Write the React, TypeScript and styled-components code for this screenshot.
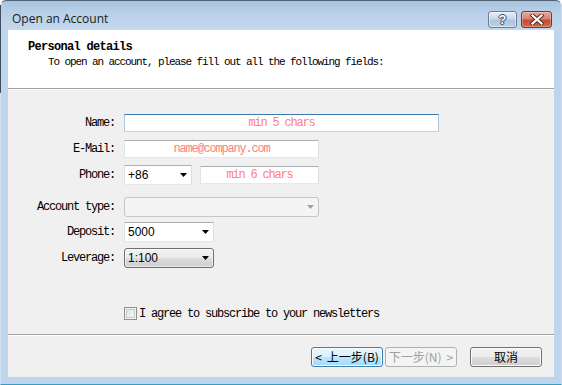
import React from "react";
import styled, { createGlobalStyle, css } from "styled-components";

const GlobalStyle = createGlobalStyle`
  html, body { margin: 0; padding: 0; background: #ffffff; }
  body { font-family: "Liberation Sans", Arial, sans-serif; }
  * { box-sizing: border-box; }
`;

const MONO = `"Liberation Mono", "Noto Sans CJK SC", monospace`;
const CJK = `"Noto Sans CJK SC", "Liberation Sans", sans-serif`;

const Window = styled.div`
  position: relative;
  width: 562px;
  height: 385px;
  display: flex;
  flex-direction: column;
  border: 1px solid #4f6274;
  border-left-color: #d3e2f2;
  border-right-color: #c9dcf0;
  border-bottom-color: #3b9cc0;
  border-radius: 6px 6px 0 0;
  background: linear-gradient(
    180deg,
    #a9c3df 0px,
    #b9d0e9 12px,
    #c3d8ee 29px,
    #bed5ed 30px,
    #bed5ed 100%
  );
  padding: 0 7px 7px 7px;
  &::before {
    content: "";
    position: absolute;
    left: -1px;
    top: 4px;
    width: 1px;
    height: 88px;
    background: #3e4f60;
  }
`;

const TitleBar = styled.div`
  height: 29px;
  display: flex;
  align-items: flex-start;
  padding-left: 4px;
`;

const Title = styled.div`
  margin-top: 10px;
  font-family: "Open Sans", "Noto Sans", sans-serif;
  font-size: 12px;
  line-height: 16px;
  color: #1a1a1a;
`;

const CaptionButtons = styled.div`
  margin-left: auto;
  margin-top: 10px;
  margin-right: 2px;
  display: flex;
  gap: 4px;
`;

const CaptionButton = styled.div<{ $variant: "help" | "close" }>`
  height: 17px;
  border-radius: 3px;
  display: flex;
  align-items: center;
  justify-content: center;
  ${(p) =>
    p.$variant === "help"
      ? css`
          width: 29px;
          border: 1px solid #6a7f96;
          background: linear-gradient(180deg, #e6eef7 0%, #c9d9ea 45%, #afc5de 55%, #bcd0e6 100%);
          box-shadow: inset 0 0 0 1px rgba(255, 255, 255, 0.45);
        `
      : css`
          width: 31px;
          border: 1px solid #6e3b33;
          background: linear-gradient(180deg, #eaa898 0%, #d9826f 45%, #c44a35 55%, #d06a4e 100%);
          box-shadow: inset 0 0 0 1px rgba(255, 220, 210, 0.35);
        `}
`;

const HelpGlyph = styled.span`
  font-family: "Liberation Sans", Arial, sans-serif;
  font-weight: bold;
  font-size: 13px;
  line-height: 13px;
  color: #ffffff;
  text-shadow: 1px 0 0 #34475c, -1px 0 0 #34475c, 0 1px 0 #34475c, 0 -1px 0 #34475c;
`;

const Client = styled.div`
  flex: 1;
  display: flex;
  flex-direction: column;
  background: #f0f0f0;
`;

const Header = styled.div`
  height: 58px;
  background: #ffffff;
  padding: 10px 0 0 20px;
  display: flex;
  flex-direction: column;
`;

const HeaderTitle = styled.div`
  font-family: ${MONO};
  font-weight: bold;
  font-size: 12px;
  letter-spacing: -0.7px;
  line-height: 14px;
  color: #000;
`;

const HeaderSubtitle = styled.div`
  margin-top: 2px;
  padding-left: 20px;
  font-family: ${MONO};
  font-size: 11px;
  letter-spacing: -1.1px;
  line-height: 13px;
  color: #000;
`;

const Rule = styled.div`
  height: 2px;
  border-top: 1px solid #a0a0a0;
  border-bottom: 1px solid #ffffff;
`;

const Body = styled.div`
  flex: 1;
  display: flex;
  flex-direction: column;
  padding-top: 24px;
`;

const FieldRow = styled.div<{ $gap: number; $h: number }>`
  display: grid;
  grid-template-columns: 107px 1fr;
  column-gap: 9px;
  align-items: center;
  height: ${(p) => p.$h}px;
  margin-top: ${(p) => p.$gap}px;
`;

const Label = styled.div`
  font-family: ${MONO};
  font-size: 12px;
  letter-spacing: -1.2px;
  line-height: 14px;
  text-align: right;
  color: #000;
  white-space: nowrap;
`;

const Controls = styled.div`
  display: flex;
  align-items: center;
  gap: 8px;
`;

const TextBox = styled.input<{ $w: number; $focused?: boolean }>`
  width: ${(p) => p.$w}px;
  height: 18px;
  margin: 0;
  padding: 0 2px;
  background: #ffffff;
  outline: none;
  font-family: ${MONO};
  font-size: 12px;
  letter-spacing: -1.2px;
  text-align: center;
  border: 1px solid;
  border-color: ${(p) =>
    p.$focused ? "#3d7bad #a4c9e3 #b7d9ed #a4c9e3" : "#abadb3 #dbdfe6 #e3e9ef #e2e3ea"};
  &::placeholder {
    color: #ff8080;
    opacity: 1;
  }
`;

type SelVariant = "white" | "disabled" | "button";

const SelectBox = styled.div<{ $w: number; $h: number; $variant: SelVariant }>`
  width: ${(p) => p.$w}px;
  height: ${(p) => p.$h}px;
  display: flex;
  align-items: center;
  padding: 0 4px 0 3px;
  font-family: "Liberation Sans", Arial, sans-serif;
  font-size: 12px;
  color: #000;
  ${(p) =>
    p.$variant === "white"
      ? css`
          background: #ffffff;
          border: 1px solid;
          border-color: #abadb3 #dbdfe6 #e3e9ef #e2e3ea;
        `
      : p.$variant === "disabled"
      ? css`
          background: #f4f4f4;
          border: 1px solid #c5c5c5;
          border-radius: 3px;
        `
      : css`
          border: 1px solid #707070;
          border-radius: 3px;
          background: linear-gradient(180deg, #f2f2f2 0%, #ebebeb 50%, #dddddd 50%, #cfcfcf 100%);
          box-shadow: inset 0 0 0 1px rgba(255, 255, 255, 0.6);
        `}
`;

const SelectValue = styled.span`
  flex: 1;
  line-height: 14px;
`;

const Arrow = styled.svg`
  flex: none;
  display: block;
`;

const CheckRow = styled.div`
  margin-top: 39px;
  margin-left: 116px;
  height: 13px;
  display: flex;
  align-items: center;
  gap: 2px;
`;

const CheckBox = styled.div`
  width: 13px;
  height: 13px;
  border: 1px solid #8f8f8f;
  background: linear-gradient(135deg, #dcdcdc 0%, #f4f4f4 80%, #fbfbfb 100%);
  box-shadow: inset 0 0 0 1px #f4f4f4, inset 0 0 0 2px #c9c9c9;
`;

const CheckLabel = styled.span`
  font-family: ${MONO};
  font-size: 12px;
  letter-spacing: -1.2px;
  line-height: 14px;
  color: #000;
`;

const Footer = styled.div`
  height: 41px;
  display: flex;
  justify-content: flex-end;
  align-items: flex-start;
  padding: 11px 12px 0 0;
  gap: 13px;
`;

const NavGroup = styled.div`
  display: flex;
  gap: 2px;
`;

type BtnVariant = "normal" | "focused" | "disabled";

const Button = styled.div<{ $variant: BtnVariant }>`
  width: 72px;
  height: 20px;
  border-radius: 3px;
  display: flex;
  align-items: center;
  justify-content: center;
  gap: 5px;
  font-family: ${CJK};
  font-size: 12px;
  line-height: 16px;
  white-space: pre;
  ${(p) =>
    p.$variant === "normal"
      ? css`
          color: #000;
          border: 1px solid #707070;
          background: linear-gradient(180deg, #f2f2f2 0%, #ebebeb 50%, #dddddd 50%, #cfcfcf 100%);
          box-shadow: inset 0 0 0 1px #fcfcfc;
        `
      : p.$variant === "focused"
      ? css`
          color: #000;
          border: 1px solid #3c7fb1;
          background: linear-gradient(180deg, #eaf6fd 0%, #d9f0fc 50%, #bee6fd 50%, #a7d9f5 100%);
          box-shadow: inset 0 0 0 1px #fcfcfc;
        `
      : css`
          color: #a0a0a0;
          border: 1px solid #adb2b5;
          background: #f4f4f4;
        `}
`;

const DownArrow: React.FC<{ color?: string }> = ({ color = "#000" }) => (
  <Arrow width="7" height="4" viewBox="0 0 7 4">
    <polygon points="0,0 7,0 3.5,4" fill={color} />
  </Arrow>
);

const CloseIcon: React.FC = () => (
  <svg width="14" height="11" viewBox="0 0 14 11">
    <path d="M2.5 1.5 L11.5 9.5 M11.5 1.5 L2.5 9.5" stroke="#5a2a22" strokeWidth="4.2" strokeLinecap="square" />
    <path d="M2.5 1.5 L11.5 9.5 M11.5 1.5 L2.5 9.5" stroke="#ffffff" strokeWidth="2.2" strokeLinecap="square" />
  </svg>
);

export default function App() {
  return (
    <>
      <GlobalStyle />
      <Window>
        <TitleBar>
          <Title>Open an Account</Title>
          <CaptionButtons>
            <CaptionButton $variant="help">
              <HelpGlyph>?</HelpGlyph>
            </CaptionButton>
            <CaptionButton $variant="close">
              <CloseIcon />
            </CaptionButton>
          </CaptionButtons>
        </TitleBar>
        <Client>
          <Header>
            <HeaderTitle>Personal details</HeaderTitle>
            <HeaderSubtitle>To open an account, please fill out all the following fields:</HeaderSubtitle>
          </Header>
          <Rule />
          <Body>
            <FieldRow $gap={0} $h={18}>
              <Label>Name:</Label>
              <Controls>
                <TextBox $w={315} $focused placeholder="min 5 chars" />
              </Controls>
            </FieldRow>
            <FieldRow $gap={8} $h={18}>
              <Label>E-Mail:</Label>
              <Controls>
                <TextBox $w={195} placeholder="name@company.com" />
              </Controls>
            </FieldRow>
            <FieldRow $gap={7} $h={20}>
              <Label>Phone:</Label>
              <Controls>
                <SelectBox $w={68} $h={20} $variant="white">
                  <SelectValue>+86</SelectValue>
                  <DownArrow />
                </SelectBox>
                <TextBox $w={119} placeholder="min 6 chars" />
              </Controls>
            </FieldRow>
            <FieldRow $gap={12} $h={20}>
              <Label>Account type:</Label>
              <Controls>
                <SelectBox $w={195} $h={20} $variant="disabled">
                  <SelectValue />
                  <DownArrow color="#a0a0a0" />
                </SelectBox>
              </Controls>
            </FieldRow>
            <FieldRow $gap={5} $h={20}>
              <Label>Deposit:</Label>
              <Controls>
                <SelectBox $w={90} $h={20} $variant="white">
                  <SelectValue>5000</SelectValue>
                  <DownArrow />
                </SelectBox>
              </Controls>
            </FieldRow>
            <FieldRow $gap={6} $h={20}>
              <Label>Leverage:</Label>
              <Controls>
                <SelectBox $w={90} $h={20} $variant="button">
                  <SelectValue>1:100</SelectValue>
                  <DownArrow />
                </SelectBox>
              </Controls>
            </FieldRow>
            <CheckRow>
              <CheckBox />
              <CheckLabel>I agree to subscribe to your newsletters</CheckLabel>
            </CheckRow>
          </Body>
          <Rule />
          <Footer>
            <NavGroup>
              <Button $variant="focused">
                <span>&lt;</span>
                <span>上一步(B)</span>
              </Button>
              <Button $variant="disabled">
                <span>下一步(N)</span>
                <span>&gt;</span>
              </Button>
            </NavGroup>
            <Button $variant="normal">取消</Button>
          </Footer>
        </Client>
      </Window>
    </>
  );
}
